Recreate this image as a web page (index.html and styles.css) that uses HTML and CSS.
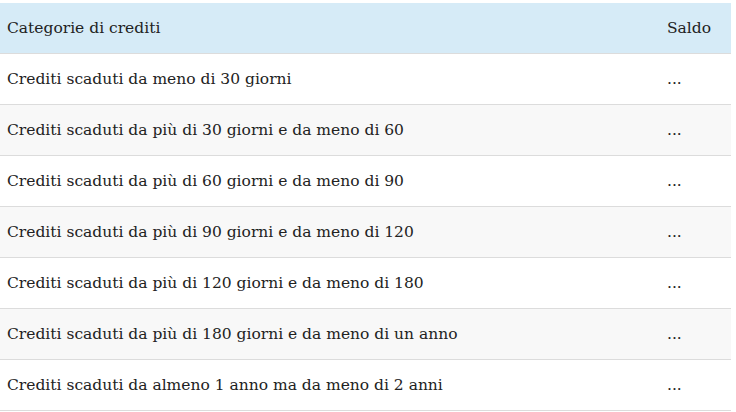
FILE: index.html
```html
<!DOCTYPE html>
<html lang="it">
<head>
    <meta charset="UTF-8">
    <meta name="viewport" content="width=device-width, initial-scale=1.0">
    <title>Categorie di crediti</title>
    <link rel="stylesheet" href="styles.css">
</head>
<body>

    <!-- Tabella crediti -->
    <table class="credit-table">
        <thead>
            <tr>
                <th class="col-name">Categorie di crediti</th>
                <th class="col-saldo">Saldo</th>
            </tr>
        </thead>
        <tbody>
            <tr>
                <td>Crediti scaduti da meno di 30 giorni</td>
                <td class="col-saldo">...</td>
            </tr>
            <tr>
                <td>Crediti scaduti da più di 30 giorni e da meno di 60</td>
                <td class="col-saldo">...</td>
            </tr>
            <tr>
                <td>Crediti scaduti da più di 60 giorni e da meno di 90</td>
                <td class="col-saldo">...</td>
            </tr>
            <tr>
                <td>Crediti scaduti da più di 90 giorni e da meno di 120</td>
                <td class="col-saldo">...</td>
            </tr>
            <tr>
                <td>Crediti scaduti da più di 120 giorni e da meno di 180</td>
                <td class="col-saldo">...</td>
            </tr>
            <tr>
                <td>Crediti scaduti da più di 180 giorni e da meno di un anno</td>
                <td class="col-saldo">...</td>
            </tr>
            <tr>
                <td>Crediti scaduti da almeno 1 anno ma da meno di 2 anni</td>
                <td class="col-saldo">...</td>
            </tr>
        </tbody>
    </table>

</body>
</html>
```

FILE: styles.css
```css
/* General Page Styling */
body {
    margin: 0;
    padding: 3px 0 0 0;
    background: white;
    color: #222;
    font-family: 'DejaVu Serif', serif;
}

/* Table */
.credit-table {
    width: 731px;
    border-collapse: collapse;
    font-size: 15.5px;
}

.credit-table th,
.credit-table td {
    box-sizing: border-box;
    height: 51px;
    padding: 0 7px;
    text-align: left;
    font-weight: normal;
    border-bottom: 1px solid #dcdcdc;
}

.credit-table thead th {
    height: 50px;
}

.credit-table thead tr {
    background: #d6ebf7;
}

.credit-table tbody tr:nth-child(even) {
    background: #f8f8f8;
}

.col-saldo {
    width: 71px;
}
```
